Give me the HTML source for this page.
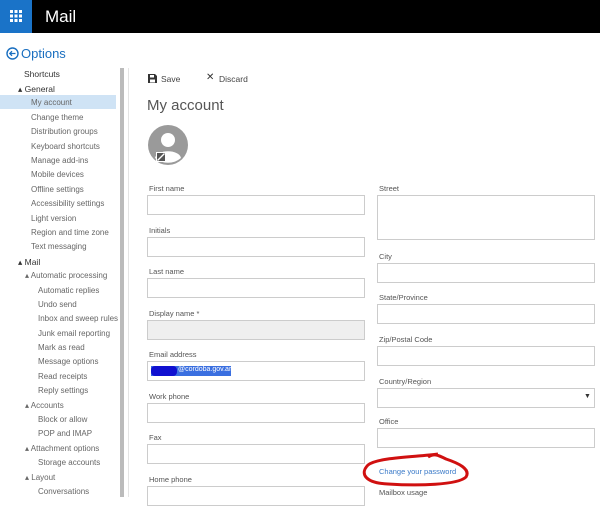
<!DOCTYPE html>
<html><head><style>
*{margin:0;padding:0;box-sizing:border-box}
body{width:600px;height:497px;overflow:hidden;background:#fff;font-family:"Liberation Sans",sans-serif;position:relative;color:#444}
.a{position:absolute;white-space:nowrap}
.s{font-size:8px;color:#666;left:31px}
.s2{left:38px}
.h{font-size:8.5px;color:#333}
.l{font-size:7.5px;color:#555}
.b{position:absolute;border:1px solid #ccc;background:#fff;height:20px;width:218px}
</style></head><body>
<div class="a" style="left:0;top:0;width:600px;height:33px;background:#000"></div>
<div class="a" style="left:0;top:0;width:32px;height:33px;background:#1a73c8"></div>
<svg class="a" style="left:10px;top:10px" width="12" height="12"><g fill="#fff"><rect x="0" y="0" width="3" height="3"/><rect x="4.5" y="0" width="3" height="3"/><rect x="9" y="0" width="3" height="3"/><rect x="0" y="4.5" width="3" height="3"/><rect x="4.5" y="4.5" width="3" height="3"/><rect x="9" y="4.5" width="3" height="3"/><rect x="0" y="9" width="3" height="3"/><rect x="4.5" y="9" width="3" height="3"/><rect x="9" y="9" width="3" height="3"/></g></svg>
<div class="a" style="left:45px;top:7px;font-size:17px;color:#fff">Mail</div>
<svg class="a" style="left:6px;top:47px" width="13" height="13"><circle cx="6.5" cy="6.5" r="5.5" fill="none" stroke="#1a6fc0" stroke-width="1.4"/><path d="M9.5 6.5H4M6 4.2L3.8 6.5 6 8.8" fill="none" stroke="#1a6fc0" stroke-width="1.3"/></svg>
<div class="a" style="left:21px;top:46px;font-size:13px;color:#1a6fc0">Options</div>
<div class="a" style="left:0;top:95px;width:116px;height:14px;background:#cfe3f5"></div>
<div class="a" style="left:120px;top:68px;width:4px;height:429px;background:#bbb"></div>
<div class="a" style="left:128px;top:68px;width:1px;height:429px;background:#e4e4e4"></div>
<div class="a h" style="left:24px;top:69px">Shortcuts</div>
<div class="a h" style="left:18px;top:84px">▴ General</div>
<div class="a s" style="top:98px">My account</div>
<div class="a s" style="top:113px">Change theme</div>
<div class="a s" style="top:127px">Distribution groups</div>
<div class="a s" style="top:142px">Keyboard shortcuts</div>
<div class="a s" style="top:156px">Manage add-ins</div>
<div class="a s" style="top:170px">Mobile devices</div>
<div class="a s" style="top:185px">Offline settings</div>
<div class="a s" style="top:199px">Accessibility settings</div>
<div class="a s" style="top:214px">Light version</div>
<div class="a s" style="top:228px">Region and time zone</div>
<div class="a s" style="top:242px">Text messaging</div>
<div class="a h" style="left:18px;top:257px">▴ Mail</div>
<div class="a s" style="left:25px;top:271px">▴ Automatic processing</div>
<div class="a s s2" style="top:286px">Automatic replies</div>
<div class="a s s2" style="top:300px">Undo send</div>
<div class="a s s2" style="top:314px">Inbox and sweep rules</div>
<div class="a s s2" style="top:329px">Junk email reporting</div>
<div class="a s s2" style="top:343px">Mark as read</div>
<div class="a s s2" style="top:357px">Message options</div>
<div class="a s s2" style="top:372px">Read receipts</div>
<div class="a s s2" style="top:386px">Reply settings</div>
<div class="a s" style="left:25px;top:401px">▴ Accounts</div>
<div class="a s s2" style="top:415px">Block or allow</div>
<div class="a s s2" style="top:429px">POP and IMAP</div>
<div class="a s" style="left:25px;top:444px">▴ Attachment options</div>
<div class="a s s2" style="top:458px">Storage accounts</div>
<div class="a s" style="left:25px;top:473px">▴ Layout</div>
<div class="a s s2" style="top:487px">Conversations</div>

<svg class="a" style="left:148px;top:74px" width="9" height="9"><path d="M0 0H7L9 2V9H0Z" fill="#333"/><rect x="2" y="1" width="4" height="2.5" fill="#fff"/><rect x="2" y="5.5" width="5" height="3" fill="#fff"/></svg>
<div class="a h" style="left:161px;top:74px;color:#444">Save</div>
<div class="a" style="left:206px;top:72px;font-size:10px;color:#333">✕</div>
<div class="a h" style="left:219px;top:74px;color:#444">Discard</div>
<div class="a" style="left:147px;top:97px;font-size:15px;color:#555">My account</div>
<svg class="a" style="left:147px;top:124px" width="42" height="42"><circle cx="21" cy="21" r="20" fill="#9a9a9a"/><circle cx="21" cy="16" r="7" fill="#fff"/><path d="M8 34C10 25 32 25 34 34A20 20 0 0 1 8 34Z" fill="#fff"/><rect x="9" y="28" width="10" height="10" fill="#fff"/><rect x="10" y="29" width="8" height="8" fill="#555"/><path d="M10.5 36.5L17.5 29.5" stroke="#fff" stroke-width="1.3"/></svg>

<div class="a l" style="left:149px;top:184px">First name</div><div class="b" style="left:147px;top:195px"></div>
<div class="a l" style="left:149px;top:226px">Initials</div><div class="b" style="left:147px;top:237px"></div>
<div class="a l" style="left:149px;top:267px">Last name</div><div class="b" style="left:147px;top:278px"></div>
<div class="a l" style="left:149px;top:309px">Display name *</div><div class="b" style="left:147px;top:320px;background:#efefef"></div>
<div class="a l" style="left:149px;top:350px">Email address</div><div class="b" style="left:147px;top:361px"></div>
<div class="a" style="left:151px;top:366px;width:80px;height:10px;background:#3a6fe0"></div>
<div class="a" style="left:151px;top:366px;width:26px;height:10px;background:#1010d0;border-radius:4px"></div>
<div class="a" style="left:178px;top:366px;font-size:7px;color:#fff">@cordoba.gov.ar</div>
<div class="a l" style="left:149px;top:392px">Work phone</div><div class="b" style="left:147px;top:403px"></div>
<div class="a l" style="left:149px;top:433px">Fax</div><div class="b" style="left:147px;top:444px"></div>
<div class="a l" style="left:149px;top:475px">Home phone</div><div class="b" style="left:147px;top:486px"></div>

<div class="a l" style="left:379px;top:184px">Street</div><div class="b" style="left:377px;top:195px;height:45px"></div>
<div class="a l" style="left:379px;top:252px">City</div><div class="b" style="left:377px;top:263px"></div>
<div class="a l" style="left:379px;top:293px">State/Province</div><div class="b" style="left:377px;top:304px"></div>
<div class="a l" style="left:379px;top:335px">Zip/Postal Code</div><div class="b" style="left:377px;top:346px"></div>
<div class="a l" style="left:379px;top:377px">Country/Region</div><div class="b" style="left:377px;top:388px"></div>
<div class="a" style="left:584px;top:393px;font-size:7px;color:#333">▼</div>
<div class="a l" style="left:379px;top:417px">Office</div><div class="b" style="left:377px;top:428px"></div>
<div class="a" style="left:379px;top:467px;font-size:7.5px;color:#3a7ac8">Change your password</div>
<svg class="a" style="left:358px;top:451px" width="112" height="38"><path d="M80 3C60 6 20 6 10 14C2 22 6 32 30 33C60 35 100 34 108 26C113 18 100 12 88 8C80 4 76 2 70 6" fill="none" stroke="#d01010" stroke-width="3"/></svg>
<div class="a l" style="left:379px;top:488px">Mailbox usage</div>
</body></html>
